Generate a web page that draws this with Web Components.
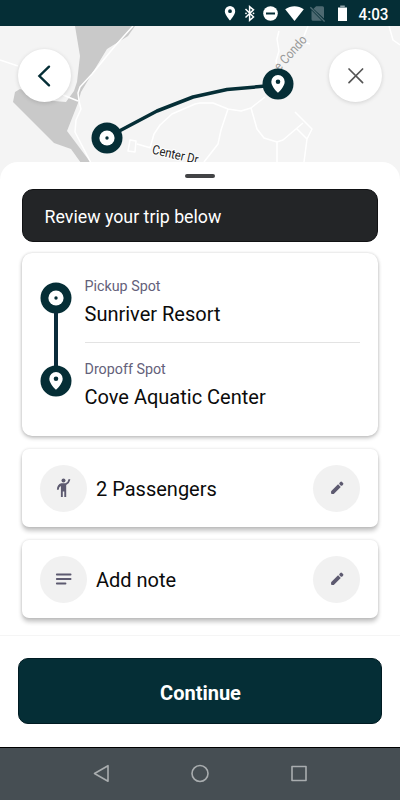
<!DOCTYPE html>
<html lang="en">
<head>
<meta charset="utf-8">
<title>Review your trip</title>
<style>
html,body{margin:0;height:100%}
body{font-family:Roboto,"Liberation Sans",sans-serif;background:#fff;color:#0b0b0b;overflow:hidden}
</style>
</head>
<body>
<trip-app></trip-app>
<script>
const define = (name, html) => {
  const template = document.createElement('template');
  template.innerHTML = html;
  customElements.define(name, class extends HTMLElement {
    constructor() {
      super();
      this.attachShadow({mode: 'open'}).append(template.content.cloneNode(true));
    }
  });
};

define('status-bar', `
<style>
:host{display:block;height:26px;background:#052e36;flex:none}
svg{display:block}
text{font-family:Roboto,sans-serif;font-weight:500;font-size:16.500px;fill:#fff}
</style>
<svg width="400" height="26" viewBox="0 0 400 26">
  <path fill="#fff" fill-rule="evenodd" d="M230 6a5.200 5.200 0 0 0-5.200 5.200c0 3.800 5.200 9.300 5.200 9.300s5.200-5.500 5.200-9.300A5.200 5.200 0 0 0 230 6zm0 3.300a1.900 1.900 0 1 1 0 3.800 1.900 1.900 0 0 1 0-3.800z"/>
  <path fill="none" stroke="#fff" stroke-width="1.500" d="M245.500 9l8 8-3.900 3.300V6.600l3.900 3.200-8 7.700"/>
  <circle cx="246" cy="13.300" r=".9" fill="#fff"/><circle cx="253.500" cy="13.300" r=".9" fill="#fff"/>
  <circle cx="270.500" cy="13.500" r="7.300" fill="#fff"/><rect x="266" y="12.500" width="9" height="2" fill="#052e36"/>
  <path fill="#fff" d="M285.200 9.300C290.800 5.300 298.200 5.300 303.800 9.300L294.500 21z"/>
  <path fill="#4d6971" d="M313.500 8.800l2.600-2.600h6.400q1.500 0 1.500 1.500v10.800zM311.500 10.300l10.300 10.500h-8.800q-1.500 0-1.500-1.500z"/>
  <path stroke="#4d6971" stroke-width="1.400" d="M310.300 7.300l14.300 14.200"/>
  <path fill="#fff" d="M338 7.500h9V21h-9z"/><path fill="#8fa3a8" d="M340.200 5.500h4.600v2h-4.600z"/>
  <text x="358.500" y="19.500" textLength="30" lengthAdjust="spacingAndGlyphs">4:03</text>
</svg>`);

define('stop-marker', `
<style>
:host{display:block;width:32px;height:32px}
svg{display:block}
.pin,:host([kind=pin]) .dot{display:none}
:host([kind=pin]) .pin{display:block}
</style>
<svg width="32" height="32" viewBox="-16 -16 32 32">
  <circle r="15.500" fill="#052e36"/>
  <g class="dot"><circle r="7.600" fill="#fff"/><circle r="1.700" fill="#052e36"/></g>
  <path class="pin" fill="#fff" fill-rule="evenodd" d="M0-9a6.700 6.700 0 0 0-6.700 6.700C-6.700 2.700 0 8.800 0 8.800S6.700 2.700 6.700-2.300A6.700 6.700 0 0 0 0-9zm0 4.500a2.300 2.300 0 1 1 0 4.600 2.300 2.300 0 0 1 0-4.600z"/>
</svg>`);

define('round-button', `
<style>
:host{display:flex;align-items:center;justify-content:center;width:53px;height:53px;border-radius:50%;background:#fff;box-shadow:0 1px 4px rgba(0,0,0,.14)}
</style><slot></slot>`);

define('trip-map', `
<style>
:host{display:block;position:relative;height:156px;background:#f4f4f4;flex:none}
svg.map{display:block}
text{font-family:Roboto,sans-serif}
stop-marker,round-button{position:absolute}
</style>
<svg class="map" width="400" height="156" viewBox="0 26 400 156">
  <path fill="#c9c9c9" d="M75 26L80 56 77 82 74 91 66 102 54 101 20 89 15 92 13 102 54 143 71 149 81 163H91L67 131 78 103 81 92 90 77 107 49 128 36 135 26z"/>
  <g fill="none" stroke="#fff" stroke-width="1.500" stroke-linejoin="round">
    <path d="M0 60l18 6M63 95l15 6M133 26L115 46 92 74 80 87 78 93 79 101 81 109 76 120 75 132 91 163"/>
    <path d="M150 148L154 134 160 125 172 114 195 104 200 103H213L228 109 241 111 251 108 265 97M130 140l6 1-1 11-7-1zM137 144l14 4"/>
    <path d="M228 109L221 130 218 144 204 162M251 108L257 129 264 138 277 142 283 140 303 123M277 142v20M295 112L312 129 307 139 297 129M307 139L304 162M279 31l-2 8 2 12-3 10 2 8M308 26l-4 10M304 42l6 2M389 26l4 14 7 5"/>
  </g>
  <path fill="none" stroke="#052e36" stroke-width="3.500" stroke-linejoin="round" d="M107 137.500L157 111l36-14 34-7.500 50-4.500"/>
  <text x="151.500" y="153.500" font-size="13" fill="#222" stroke="#fff" stroke-width="2" paint-order="stroke" textLength="47" lengthAdjust="spacingAndGlyphs" transform="rotate(13 151.500 153.500)">Center Dr</text>
  <text x="279.500" y="71.500" font-size="13" fill="#999" textLength="42" lengthAdjust="spacingAndGlyphs" transform="rotate(-48 279.500 71.500)">e Condo</text>
</svg>
<stop-marker style="left:91px;top:95.500px"></stop-marker>
<stop-marker kind="pin" style="left:262px;top:42px"></stop-marker>
<round-button style="left:18px;top:23px">
  <svg width="24" height="24" fill="none" stroke="#052e36" stroke-width="2.400" stroke-linecap="round"><path d="M16 2.700L6.400 12l9.600 9.300"/></svg>
</round-button>
<round-button style="left:329px;top:23px">
  <svg width="24" height="24" fill="none" stroke="#555" stroke-width="1.700" stroke-linecap="round"><path d="M5 5l13.600 13.600M18.600 5L5 18.600"/></svg>
</round-button>`);

define('trip-banner', `
<style>
:host{display:flex;align-items:center;box-sizing:border-box;height:53px;padding:2px 21.500px 0;border-radius:11px;background:#232527;border:1px solid #111214;color:#fff;font-size:17.800px}
</style><span><slot></slot></span>`);

define('trip-card', `
<style>
:host{display:block;box-sizing:border-box;border-radius:10px;background:#fff;box-shadow:0 2px 4px rgba(0,0,0,.24),0 0 3px rgba(0,0,0,.13)}
</style><slot></slot>`);

define('trip-stop', `
<style>
:host{display:block;height:83px;box-sizing:border-box}
.label{font-size:14.300px;line-height:20px;color:#64617a}
.place{font-size:20px;line-height:26px;margin-top:5px}
</style>
<div class="label"><slot name="label"></slot></div><div class="place"><slot></slot></div>`);

define('trip-route', `
<style>
:host{display:flex;height:183px;box-sizing:border-box;padding:23px 18px 0}
.rail{display:flex;flex-direction:column;align-items:center;width:31px;padding-top:5.500px}
.line{width:4px;height:55px;margin:-2px 0;background:#0a2b3a}
.stops{flex:1;margin-left:13.500px}
trip-stop:first-child{height:67px;border-bottom:1px solid #e3e3e3}
trip-stop:last-child{margin-top:16px}
</style>
<div class="rail"><stop-marker></stop-marker><div class="line"></div><stop-marker kind="pin"></stop-marker></div>
<div class="stops">
  <trip-stop><span slot="label">Pickup Spot</span>Sunriver Resort</trip-stop>
  <trip-stop><span slot="label">Dropoff Spot</span>Cove Aquatic Center</trip-stop>
</div>`);

define('option-row', `
<style>
:host{display:flex;align-items:center;height:78px;padding:0 18px}
.disc{display:flex;align-items:center;justify-content:center;width:47px;height:47px;border-radius:50%;background:#f1f1f1}
.text{flex:1;margin-left:9px;font-size:20px;padding-top:1px}
</style>
<div class="disc"><slot name="icon"></slot></div>
<div class="text"><slot></slot></div>
<div class="disc"><svg width="16" height="16" viewBox="-8 -8 16 16"><g transform="rotate(-45)" fill="#5d5a70"><path d="M-8-.4L-6.500-1.900H3.400V1.900H-6.500L-8 .4z"/><rect x="4.400" y="-1.900" width="3.400" height="3.800" rx="1.200"/></g></svg></div>`);

define('primary-button', `
<style>
:host{display:flex;align-items:center;justify-content:center;box-sizing:border-box;height:66px;padding:3px 0 0 1px;border-radius:10px;background:#052e36;border:1px solid #001b22;color:#fff;font-size:20px;font-weight:700}
</style><span><slot></slot></span>`);

define('nav-bar', `
<style>
:host{display:block;height:53px;box-sizing:border-box;background:#464e53;border-top:1px solid #000;flex:none}
svg{display:block}
</style>
<svg width="400" height="52" viewBox="0 748 400 52" fill="none" stroke="#a9adaf" stroke-width="1.600" stroke-linejoin="round">
  <path d="M108 765.700v15.600L94.500 773.500z"/><circle cx="200" cy="773.500" r="8"/><rect x="292" y="766.500" width="14" height="14"/>
</svg>`);

define('trip-app', `
<style>
:host{display:flex;flex-direction:column;height:800px;width:400px}
main{position:relative;display:flex;flex-direction:column;flex:1;margin-top:-20px;border-radius:18px 18px 0 0;background:#fff}
.handle{width:30px;height:4px;border-radius:2px;background:#424345;margin:11.500px auto}
.list{display:flex;flex-direction:column;padding:0 22px;height:446px}
.route{margin-top:11px}
.row{margin-top:13px;border-radius:7px;box-shadow:0 4px 4px rgba(0,0,0,.22),0 0 3px rgba(0,0,0,.15)}
footer{flex:1;box-sizing:border-box;border-top:1px solid #f5f5f5;padding:22px 18px}
</style>
<status-bar></status-bar>
<trip-map></trip-map>
<main>
  <div class="handle"></div>
  <div class="list">
    <trip-banner>Review your trip below</trip-banner>
    <trip-card class="route"><trip-route></trip-route></trip-card>
    <trip-card class="row"><option-row>
      <svg slot="icon" width="20" height="20" fill="#5d5a70"><circle cx="9.500" cy="2.600" r="2"/><path d="M7.200 5.200h4.300q2.400-.7 3.200-4.200l1.700.4q-.8 3.800-4.200 5.500v12h-1.900v-5.500H8.800v5.500H6.900V8Q4.900 8.500 4.700 11.700H2.900Q3.100 6.400 7.200 5.200z"/></svg>
      2 Passengers</option-row></trip-card>
    <trip-card class="row"><option-row>
      <svg slot="icon" width="20" height="20" stroke="#5d5a70" stroke-width="1.800" stroke-linecap="round"><path d="M2.800 5.500H16.600M2.800 10H16.600M2.800 14.500H11.500"/></svg>
      Add note</option-row></trip-card>
  </div>
  <footer><primary-button>Continue</primary-button></footer>
</main>
<nav-bar></nav-bar>`);
</script>
</body>
</html>
